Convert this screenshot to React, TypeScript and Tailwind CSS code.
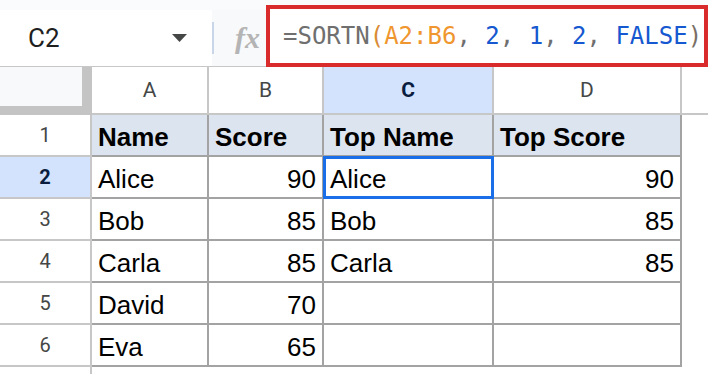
import React from 'react';

const rows = [
  ['Name', 'Score', 'Top Name', 'Top Score'],
  ['Alice', '90', 'Alice', '90'],
  ['Bob', '85', 'Bob', '85'],
  ['Carla', '85', 'Carla', '85'],
  ['David', '70', '', ''],
  ['Eva', '65', '', ''],
];

const widths = ['w-[117px]', 'w-[115px]', 'w-[170px]', 'w-[188px]'];
const letters = ['A', 'B', 'C', 'D'];

const FormulaBar = () => (
  <div className="h-[67px] bg-[#f9fbfd] border-b border-[#c7c7c7] flex items-start">
    <div className="w-[212px] h-[56px] mt-[10px] bg-white flex items-center pl-[28px] pr-[25px]">
      <span className="font-['Roboto',sans-serif] text-[26px] leading-none text-[#1f1f1f]">C2</span>
      <svg width="15" height="8" viewBox="0 0 15 8" className="ml-auto">
        <polygon points="0,0 15,0 7.5,8" fill="#444746" />
      </svg>
    </div>
    <div className="w-[54px] h-[56px] mt-[10px] bg-[#f8f9fa] flex items-center">
      <div className="w-[2px] h-[32px] bg-[#c9d6ea]" />
      <span className="ml-[21px] font-['Liberation_Serif',serif] italic font-bold text-[30px] leading-none text-[#b4b4b4]">
        fx
      </span>
    </div>
    <div className="flex-1 h-[62px] mt-[5px] border-4 border-[#d92b2b] bg-white flex items-center pl-[13px] font-['DejaVu_Sans_Mono',monospace] text-[24px] leading-none whitespace-pre">
      <span className="text-[#6f6f6f]">=SORTN</span>
      <span className="text-[#d98b35]">(</span>
      <span className="text-[#f0962f]">A2:B6</span>
      <span className="text-[#6f6f6f]">, </span>
      <span className="text-[#1558d0]">2</span>
      <span className="text-[#6f6f6f]">, </span>
      <span className="text-[#1558d0]">1</span>
      <span className="text-[#6f6f6f]">, </span>
      <span className="text-[#1558d0]">2</span>
      <span className="text-[#6f6f6f]">, </span>
      <span className="text-[#1558d0]">FALSE</span>
      <span className="text-[#7a6f66]">)</span>
    </div>
  </div>
);

const HeaderRow = () => (
  <div className="flex h-[48px]">
    <div className="w-[92px] h-[48px] bg-[#c4c4c4]">
      <div className="w-[82px] h-[39px] bg-[#f8f9fa]" />
    </div>
    {letters.map((l, i) => (
      <div
        key={l}
        className={`${widths[i]} h-[48px] border-r-2 border-b-2 border-[#c7c7c7] flex items-center justify-center font-['Roboto',sans-serif] text-[21px] leading-none ${
          l === 'C' ? 'bg-[#d3e3fd] font-bold text-[#0b1d3f]' : 'bg-white text-[#444746]'
        }`}
      >
        {l}
      </div>
    ))}
    <div className="flex-1 h-[48px] border-b-2 border-[#c7c7c7]" />
  </div>
);

const App = () => {
  return (
    <div className="w-[708px] h-[374px] overflow-hidden bg-white">
      <FormulaBar />
      <HeaderRow />
      {rows.map((row, r) => (
        <div key={r} className="flex h-[42px]">
          <div
            className={`w-[92px] h-[42px] border-r-2 border-b-2 border-[#c7c7c7] flex items-center justify-center font-['Roboto',sans-serif] text-[20px] leading-none ${
              r === 1 ? 'bg-[#d3e3fd] font-bold text-[#0b1d3f]' : 'bg-white text-[#444746]'
            }`}
          >
            {r + 1}
          </div>
          {row.map((v, c) => (
            <div
              key={c}
              className={`${widths[c]} h-[42px] relative border-r-2 border-b-2 border-[#a3a3a3] flex items-end pb-[5px] px-[6px] font-['Liberation_Sans',Arial,sans-serif] text-[26px] leading-[26px] text-black ${
                r === 0 ? 'bg-[#dce4ef] font-bold' : 'bg-white'
              } ${r > 0 && c % 2 === 1 ? 'justify-end' : 'justify-start'}`}
            >
              {v}
              {r === 1 && c === 2 && (
                <div className="absolute -left-px -top-px w-[171px] h-[43px] border-[3px] border-[#1a6ee8]" />
              )}
            </div>
          ))}
          <div className="flex-1" />
        </div>
      ))}
      <div className="flex h-[10px]">
        <div className="w-[92px] h-[10px] border-r-2 border-[#c7c7c7]" />
      </div>
    </div>
  );
};

export default App;
